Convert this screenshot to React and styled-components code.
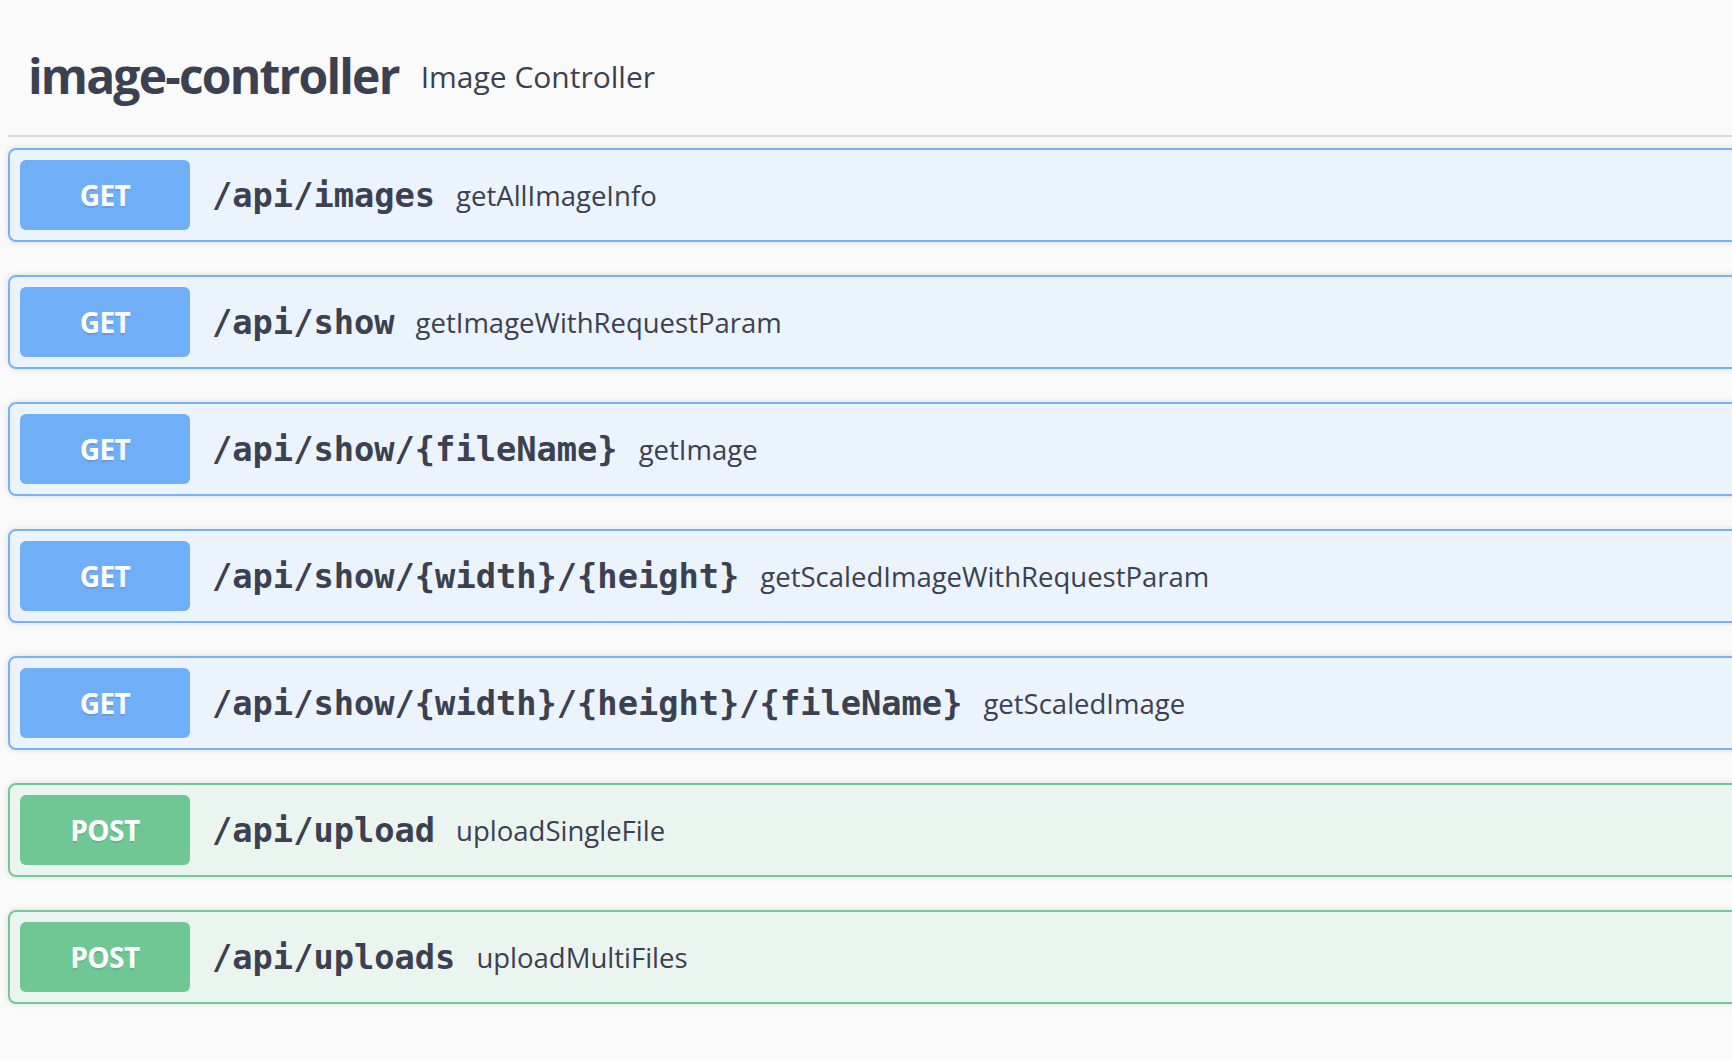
import React from 'react';
import styled, { createGlobalStyle } from 'styled-components';

const GlobalStyle = createGlobalStyle`
  html, body {
    margin: 0;
    padding: 0;
    background: #fafafa;
    overflow: hidden;
  }
  body {
    font-family: "Open Sans", "Noto Sans", sans-serif;
    color: #3b4151;
  }
`;

const methods = {
  get: { badge: '#71aef8', border: '#77b2f7', bg: '#ebf3fc' },
  post: { badge: '#6fc894', border: '#72c997', bg: '#ebf5f0' },
};

const endpoints = [
  { method: 'get', path: '/api/images', summary: 'getAllImageInfo' },
  { method: 'get', path: '/api/show', summary: 'getImageWithRequestParam' },
  { method: 'get', path: '/api/show/{fileName}', summary: 'getImage' },
  { method: 'get', path: '/api/show/{width}/{height}', summary: 'getScaledImageWithRequestParam' },
  { method: 'get', path: '/api/show/{width}/{height}/{fileName}', summary: 'getScaledImage' },
  { method: 'post', path: '/api/upload', summary: 'uploadSingleFile' },
  { method: 'post', path: '/api/uploads', summary: 'uploadMultiFiles' },
];

function App() {
  return (
    <>
      <GlobalStyle />
      <Page>
        <TagHeader>
          <TagName>image-controller</TagName>
          <TagDescription>Image Controller</TagDescription>
        </TagHeader>
        <OpList>
          {endpoints.map((op) => (
            <OpBlock key={op.method + op.path} $method={op.method}>
              <MethodBadge $method={op.method}>{op.method.toUpperCase()}</MethodBadge>
              <OpPath>{op.path}</OpPath>
              <OpSummary>{op.summary}</OpSummary>
            </OpBlock>
          ))}
        </OpList>
      </Page>
    </>
  );
}

export default App;

const Page = styled.div`
  width: 1800px;
  padding-left: 8px;
  min-height: 1060px;
`;

const TagHeader = styled.div`
  display: flex;
  align-items: center;
  padding: 52px 20px 35px 20px;
  border-bottom: 2px solid #d5d6da;
`;

const TagName = styled.h4`
  margin: 0;
  font-size: 48px;
  line-height: 48px;
  font-weight: 700;
  letter-spacing: -1.8px;
  color: #3b4151;
`;

const TagDescription = styled.small`
  margin-left: 22px;
  font-size: 30px;
  font-weight: 400;
  color: #3b4151;
`;

const OpList = styled.div`
  margin-top: 11px;
  display: flex;
  flex-direction: column;
  gap: 33px;
`;

const OpBlock = styled.div`
  display: flex;
  align-items: center;
  padding: 10px;
  border: 2px solid ${(p) => methods[p.$method].border};
  border-radius: 8px;
  background: ${(p) => methods[p.$method].bg};
  box-shadow: 0 0 6px rgba(0, 0, 0, 0.12);
`;

const MethodBadge = styled.span`
  flex: 0 0 auto;
  width: 170px;
  height: 70px;
  display: flex;
  align-items: center;
  justify-content: center;
  border-radius: 6px;
  background: ${(p) => methods[p.$method].badge};
  color: #fff;
  font-size: 28px;
  font-weight: 700;
  letter-spacing: -0.5px;
  text-shadow: 0 2px 0 rgba(0, 0, 0, 0.1);
`;

const OpPath = styled.span`
  margin-left: 22px;
  font-family: "DejaVu Sans Mono", "Liberation Mono", monospace;
  font-size: 33.7px;
  font-weight: 700;
  color: #3b4151;
`;

const OpSummary = styled.span`
  margin-left: 21px;
  font-size: 27.5px;
  color: #3b4151;
`;
